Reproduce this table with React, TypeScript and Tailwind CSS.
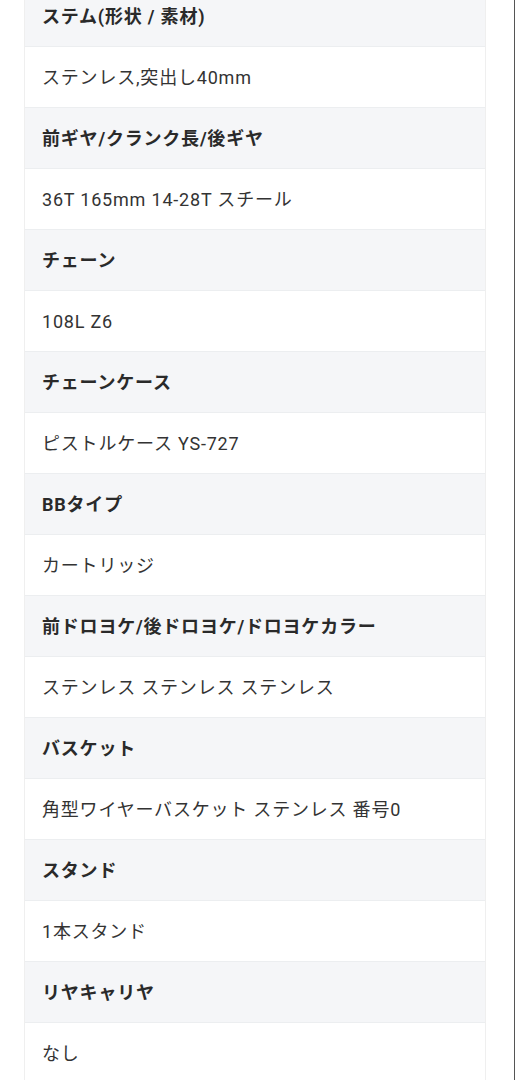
const specs: [string, string][] = [
  ['ステム(形状 / 素材)', 'ステンレス,突出し40mm'],
  ['前ギヤ/クランク長/後ギヤ', '36T 165mm 14-28T スチール'],
  ['チェーン', '108L Z6'],
  ['チェーンケース', 'ピストルケース YS-727'],
  ['BBタイプ', 'カートリッジ'],
  ['前ドロヨケ/後ドロヨケ/ドロヨケカラー', 'ステンレス ステンレス ステンレス'],
  ['バスケット', '角型ワイヤーバスケット ステンレス 番号0'],
  ['スタンド', '1本スタンド'],
  ['リヤキャリヤ', 'なし'],
]

export default function App() {
  return (
    <div
      className="h-[1080px] w-[515px] overflow-hidden bg-white border-r border-[#555]"
      style={{ fontFamily: 'Roboto, "Noto Sans CJK JP", sans-serif' }}
    >
      <div className="-mt-[14px] ml-[24px] w-[462px] border-x border-[#efefef] text-[18px] tracking-[0.8px] text-[#333]">
        {specs.map(([label, value]) => (
          <div key={label}>
            <div className="flex h-[61px] items-center border-b border-[#eceef0] bg-[#f5f6f8] px-[17px] font-bold text-[#2a2a2a]">
              {label}
            </div>
            <div className="flex h-[61px] items-center border-b border-[#eceef0] bg-white px-[17px]">
              {value}
            </div>
          </div>
        ))}
      </div>
    </div>
  )
}
